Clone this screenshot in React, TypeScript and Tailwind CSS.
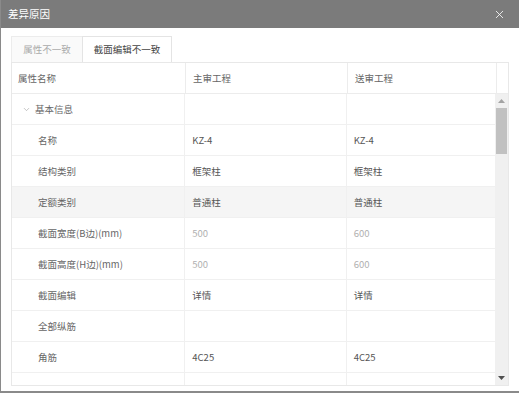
import { X, ChevronDown } from 'lucide-react';

type Row = {
  name: string;
  main: string;
  audit: string;
  group?: boolean;
  muted?: boolean;
  highlight?: boolean;
};

const rows: Row[] = [
  { name: '基本信息', main: '', audit: '', group: true },
  { name: '名称', main: 'KZ-4', audit: 'KZ-4' },
  { name: '结构类别', main: '框架柱', audit: '框架柱' },
  { name: '定额类别', main: '普通柱', audit: '普通柱', highlight: true },
  { name: '截面宽度(B边)(mm)', main: '500', audit: '600', muted: true },
  { name: '截面高度(H边)(mm)', main: '500', audit: '600', muted: true },
  { name: '截面编辑', main: '详情', audit: '详情' },
  { name: '全部纵筋', main: '', audit: '' },
  { name: '角筋', main: '4C25', audit: '4C25' },
  { name: '', main: '', audit: '' },
];

export default function App() {
  return (
    <div
      className="w-[519px] h-[393px] bg-white border-l border-b-2 border-[#8a8a8a] flex flex-col overflow-hidden text-[9.5px] text-[#555]"
      style={{ fontFamily: '"Noto Sans CJK SC", "Noto Sans", sans-serif' }}
    >
      {/* Title bar */}
      <div className="h-[28px] shrink-0 bg-[#7b7b7b] flex items-center justify-between pl-[7px] pr-[13px]">
        <span className="text-white text-[10.5px]">差异原因</span>
        <X className="w-[13px] h-[13px] text-white" strokeWidth={1.5} />
      </div>

      <div className="flex-1 flex flex-col pl-[10px] pr-[10px] pt-[8px]">
        {/* Tabs */}
        <div className="flex h-[26px] shrink-0">
          <div className="w-[71px] flex items-center justify-center bg-[#fafafa] border-t border-l border-[#ececec] text-[#aaa]">
            属性不一致
          </div>
          <div className="w-[90px] flex items-center justify-center bg-white border-t border-l border-r border-[#e4e4e4] text-[#444]">
            截面编辑不一致
          </div>
        </div>

        {/* Table */}
        <div className="w-[498px] border border-[#e8e8e8] flex flex-col">
          <div className="flex h-[31px] border-b border-[#ececec] text-[#666]">
            <div className="w-[174px] flex items-center pl-[6px] border-r border-[#ececec]">属性名称</div>
            <div className="w-[162px] flex items-center pl-[7px] border-r border-[#ececec]">主审工程</div>
            <div className="w-[149px] flex items-center pl-[7px] border-r border-[#ececec]">送审工程</div>
            <div className="flex-1" />
          </div>

          <div className="flex h-[291px]">
            <div className="w-[485px] overflow-hidden">
              {rows.map((r, i) => (
                <div
                  key={i}
                  className={`flex h-[31px] border-b border-[#f0f0f0] ${r.highlight ? 'bg-[#f5f5f5]' : 'bg-white'}`}
                >
                  <div className="w-[174px] flex items-center border-r border-[#f0f0f0]">
                    {r.group ? (
                      <span className="flex items-center pl-[10px] gap-[4px] text-[#666]">
                        <ChevronDown className="w-[9px] h-[9px] text-[#999]" strokeWidth={1.5} />
                        {r.name}
                      </span>
                    ) : (
                      <span className="pl-[26px] text-[#666]">{r.name}</span>
                    )}
                  </div>
                  <div className={`w-[162px] flex items-center pl-[7px] border-r border-[#f0f0f0] ${r.muted ? 'text-[#b0b0b0]' : 'text-[#555]'}`}>
                    {r.main}
                  </div>
                  <div className={`w-[149px] flex items-center pl-[7px] ${r.muted ? 'text-[#b0b0b0]' : 'text-[#555]'}`}>
                    {r.audit}
                  </div>
                </div>
              ))}
            </div>

            {/* Scrollbar */}
            <div className="w-[13px] bg-[#f0f0f0] flex flex-col items-center">
              <div className="h-[14px] flex items-center justify-center">
                <svg width="7" height="4" viewBox="0 0 7 4">
                  <path d="M3.5 0 L7 4 L0 4 Z" fill="#a3a3a3" />
                </svg>
              </div>
              <div className="w-[11px] h-[46px] bg-[#c1c1c1]" />
              <div className="flex-1" />
              <div className="h-[14px] flex items-center justify-center">
                <svg width="7" height="4" viewBox="0 0 7 4">
                  <path d="M0 0 L7 0 L3.5 4 Z" fill="#505050" />
                </svg>
              </div>
            </div>
          </div>
        </div>
      </div>
    </div>
  );
}
